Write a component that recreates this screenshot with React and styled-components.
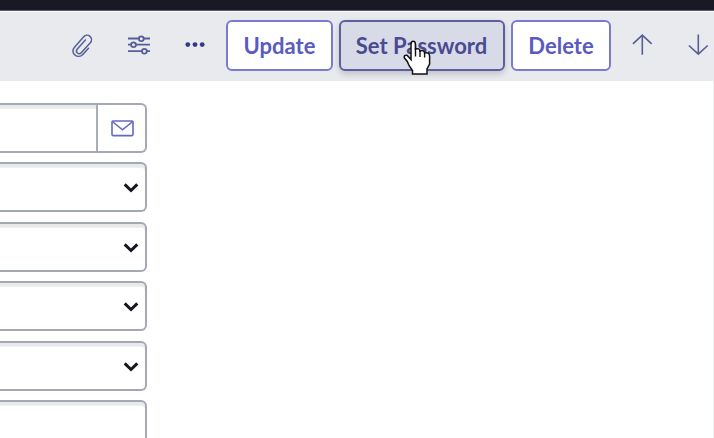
import styled, { createGlobalStyle, css } from "styled-components";

const GlobalStyle = createGlobalStyle`
  * {
    box-sizing: border-box;
  }
  body {
    margin: 0;
    overflow: hidden;
    background-color: #fff;
    font-family: Lato, "Open Sans", sans-serif;
  }
`;

const Page = styled.div`
  width: 714px;
  height: 438px;
  overflow: hidden;
  display: flex;
  flex-direction: column;
  background-color: #fff;
`;

const TopBar = styled.div`
  flex: none;
  height: 11px;
  background-color: #191825;
  border-bottom: 1px solid #5c5b66;
`;

const Toolbar = styled.header`
  flex: none;
  display: flex;
  align-items: flex-start;
  height: 70px;
  padding: 8px 0 0 69px;
  background-color: #e8eaed;
  border-top: 1px solid #f8f9fa;
`;

const IconGroup = styled.div`
  display: flex;
  flex: none;
  width: 157px;
`;

const IconButton = styled.button`
  flex: none;
  display: flex;
  padding: 0;
  border: none;
  background: none;
  width: ${(props) => props.$width || 56}px;
  height: 51px;
  color: #585e98;
  svg {
    display: block;
    overflow: visible;
  }
`;

const ActionGroup = styled.div`
  display: flex;
  flex: none;
  gap: 6px;
  margin-right: 20px;
`;

const ActionButton = styled.button`
  position: relative;
  width: ${(props) => props.$width}px;
  height: 51px;
  padding: 1px 0 0;
  border: 2px solid #7a7bd0;
  border-radius: 6px;
  background-color: #fff;
  color: #595bc0;
  font-family: inherit;
  font-size: 22px;
  font-weight: 700;
  line-height: 26px;
  white-space: nowrap;
  ${(props) =>
    props.$hovered &&
    css`
      padding-right: 1px;
      border-color: #5c5e9f;
      background-color: #d8dae7;
      color: #494b91;
      box-shadow: 0 3px 6px rgba(30, 30, 60, 0.2);
    `}
`;

const Pointer = styled.svg`
  position: absolute;
  left: 60.5px;
  top: 18px;
  z-index: 1;
`;

const Content = styled.main`
  flex: 1;
  padding-top: 22px;
  border-right: 1px solid #eeeff1;
`;

const Form = styled.form`
  display: flex;
  flex-direction: column;
  gap: 9.4px;
  width: 147px;
`;

const insetShade = css`
  box-shadow: inset 0 3px 0 #e8e9e9, inset 0 4px 0 #f0f0f1;
`;

const Field = styled.div`
  flex: none;
  display: flex;
  align-items: center;
  justify-content: flex-end;
  height: 50px;
  padding: ${(props) => (props.$flush ? 0 : "2px 6px 0 0")};
  border: 2px solid #a4a8b3;
  border-left: none;
  border-radius: 0 6px 6px 0;
  background-color: #fff;
  ${(props) => !props.$flush && insetShade}
`;

const FieldValue = styled.div`
  flex: 1;
  align-self: stretch;
  ${insetShade}
`;

const FieldAddon = styled.div`
  display: flex;
  align-items: center;
  justify-content: center;
  width: 49px;
  padding-left: 1px;
  align-self: stretch;
  border-left: 2px solid #a9adb8;
`;

const Clip = () => (
  <svg width="26" height="51" viewBox="0 0 26 51" fill="none" stroke="currentColor" strokeWidth="1.5" strokeLinecap="round">
    <path d="M19.5 28.3 13.8 34.4C11.6 36.7 8.2 37 5.9 35C3.4 32.8 3.3 29.7 5.5 27.3L14.5 17C16.3 15 19.2 14.8 21 16.4C22.9 18.1 23 20.8 21.3 22.8L12.5 32.5C11.3 33.9 9.6 34 8.4 33C7.1 31.8 7.1 30.3 8.3 28.9L16.4 19.9" />
  </svg>
);

const Sliders = () => (
  <svg width="24" height="51" viewBox="0 0 24 51" fill="none" stroke="currentColor" strokeWidth="1.8">
    <path d="M1 18.5h11M17 18.5h6M1 24.7h3M9 24.7h14M1 31.2h14M20 31.2h3" />
    <circle cx="14.3" cy="18.7" r="2.4" />
    <circle cx="6.5" cy="24.8" r="2.4" />
    <circle cx="17.4" cy="31.2" r="2.4" />
  </svg>
);

const Dots = () => (
  <svg width="24" height="51" viewBox="0 0 24 51" fill="#343888">
    <circle cx="4.8" cy="24.6" r="2.4" />
    <circle cx="12" cy="24.6" r="2.4" />
    <circle cx="19.2" cy="24.6" r="2.4" />
  </svg>
);

const Arrow = ({ down }) => (
  <svg width="22" height="51" viewBox="0 0 22 51" fill="none" stroke="currentColor" strokeWidth="1.6">
    <path d={down ? "M11.3 14.5v19M1.9 25.5 11.3 34.1l9.4-8.6" : "M11.3 34.8v-19M1.9 23.8 11.3 15.1l9.4 8.7"} />
  </svg>
);

const Mail = () => (
  <svg width="23" height="17" viewBox="0 0 23 17" fill="none" stroke="#6668c7" strokeWidth="1.6">
    <rect x="1" y="1" width="21" height="14.6" rx="1" />
    <path d="M1.3 1.5 11.5 9.8 21.7 1.5" />
  </svg>
);

const Chevron = () => (
  <svg width="16" height="12" viewBox="0 0 16 12" fill="none" stroke="#151720" strokeWidth="3">
    <path d="M1.7 2.4 8 8.5l6.3-6.1" />
  </svg>
);

const HandPointer = () => (
  <Pointer width="30" height="36" viewBox="0 0 30 36">
    <path
      d="M9 18V4.2Q9 1.2 11.2 1.2Q13.4 1.2 13.4 4.2V9Q17.6 7.8 18 11Q22 9.5 22.6 12.8Q27.3 12 27.6 16V24L25 29V34H10.5V30.5L7 25.5L5.3 21.5L2.3 17.8Q1.7 14.8 5 15.2L9 19.5Z"
      fill="#fff"
      stroke="#111"
      strokeWidth="1.5"
    />
    <path d="M13.5 8v8.5M18 10v7M22.6 12v5.5" stroke="#111" strokeWidth="1.4" />
  </Pointer>
);

export default function App() {
  return (
    <>
      <GlobalStyle />
      <Page>
        <TopBar />
        <Toolbar>
          <IconGroup>
            <IconButton $width={58} aria-label="Attachments">
              <Clip />
            </IconButton>
            <IconButton aria-label="Personalize">
              <Sliders />
            </IconButton>
            <IconButton $width={43} aria-label="More options">
              <Dots />
            </IconButton>
          </IconGroup>
          <ActionGroup>
            <ActionButton $width={107}>Update</ActionButton>
            <ActionButton $width={166} $hovered>
              Set Password
              <HandPointer />
            </ActionButton>
            <ActionButton $width={100}>Delete</ActionButton>
          </ActionGroup>
          <IconButton aria-label="Previous record">
            <Arrow />
          </IconButton>
          <IconButton aria-label="Next record">
            <Arrow down />
          </IconButton>
        </Toolbar>
        <Content>
          <Form>
            <Field $flush>
              <FieldValue />
              <FieldAddon>
                <Mail />
              </FieldAddon>
            </Field>
            {[0, 1, 2, 3].map((row) => (
              <Field key={row}>
                <Chevron />
              </Field>
            ))}
            <Field />
          </Form>
        </Content>
      </Page>
    </>
  );
}
